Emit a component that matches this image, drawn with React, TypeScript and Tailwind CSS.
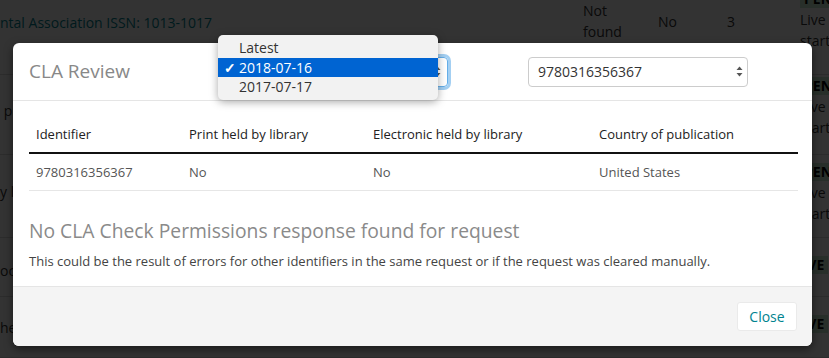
import React from 'react';

const font = { fontFamily: '"Open Sans", "Liberation Sans", sans-serif' };

const rows = [
  { h: 'h-[75px]', left: 'ntal Association ISSN: 1013-1017', leftY: 'pt-[12px]', right: '-mt-[12px]', mid: true, badge: 'PENDING', lines: true },
  { h: 'h-[80px]', left: ' print provided', leftY: 'pt-[25px]', right: 'pt-0', mid: false, badge: 'PENDING', lines: true },
  { h: 'h-[83px]', left: 'y library', leftY: 'pt-[26px]', right: 'pt-[6px]', mid: false, badge: 'PENDING', lines: true },
  { h: 'h-[59px]', left: 'ocess', leftY: 'pt-[22px]', right: 'pt-[16px]', mid: false, badge: 'ACTIVE', lines: false },
  { h: 'h-[61px]', left: 'here', leftY: 'pt-[20px]', right: 'pt-[16px]', mid: false, badge: 'ACTIVE', lines: false },
];

const Backdrop: React.FC = () => (
  <div className="bg-white text-[14px] leading-[21px] text-[#333]">
    {rows.map((r, i) => (
      <div key={i} className={`flex ${r.h} border-b border-[#ddd] overflow-hidden`}>
        <div className={`w-[583px] shrink-0 whitespace-pre ${r.leftY} ${i === 0 ? 'text-[#00838f]' : ''}`}>
          {r.left}
        </div>
        <div className="w-[75px] shrink-0">{r.mid ? <>Not<br />found</> : null}</div>
        <div className="w-[69px] shrink-0 pt-[11px]">{r.mid ? 'No' : null}</div>
        <div className="w-[73px] shrink-0 pt-[11px]">{r.mid ? '3' : null}</div>
        <div className={`shrink-0 ${r.right} ${r.lines ? '' : '-ml-[28px]'}`}>
          <span className="inline-block bg-[#c9e8cf] px-1 font-bold text-black leading-[18px]">{r.badge}</span>
          {r.lines ? (
            <>
              <div className="whitespace-nowrap">Live l</div>
              <div className="whitespace-nowrap">start</div>
            </>
          ) : null}
        </div>
      </div>
    ))}
  </div>
);

const Arrows: React.FC = () => (
  <svg width="7" height="11" viewBox="0 0 7 11" className="shrink-0">
    <path d="M3.5 0.5 L6.5 4 L0.5 4 Z" fill="#555" />
    <path d="M3.5 10.5 L6.5 7 L0.5 7 Z" fill="#555" />
  </svg>
);

export default function App() {
  return (
    <div className="relative h-[358px] w-[829px] overflow-hidden" style={font}>
      <Backdrop />
      <div className="absolute inset-0 bg-black/80" />

      {/* modal */}
      <div className="absolute left-[13px] top-[43px] w-[799px] rounded-[6px] bg-white shadow-[0_3px_9px_rgba(0,0,0,0.5)] overflow-hidden">
        <div className="flex items-center h-[58px] px-[16px] border-b border-[#e5e5e5]">
          <div className="w-[199px] text-[19px] text-[#888] leading-none">CLA Review</div>
          <div className="w-[220px] h-[30px] rounded-[4px] border border-[#66afe9] shadow-[0_0_0_3px_rgba(102,175,233,0.6)] flex items-center justify-end px-[6px] text-[14px] text-[#333]">
            <Arrows />
          </div>
          <div className="ml-[80px] w-[220px] h-[30px] rounded-[4px] border border-[#ccc] flex items-center justify-between pl-[9px] pr-[4px] text-[14px] text-[#333]">
            <span>9780316356367</span>
            <Arrows />
          </div>
        </div>

        <div className="px-[16px] pt-[15px] pb-[16px]">
          <table className="w-[769px] text-[13px] leading-[20px] table-fixed border-collapse">
            <thead>
              <tr className="border-b-2 border-[#111] text-[#222]">
                <th className="w-[152px] text-left font-normal px-[7px] py-[8px]">Identifier</th>
                <th className="w-[184px] text-left font-normal px-[8px] py-[8px]">Print held by library</th>
                <th className="w-[226px] text-left font-normal px-[8px] py-[8px]">Electronic held by library</th>
                <th className="text-left font-normal px-[8px] py-[8px]">Country of publication</th>
              </tr>
            </thead>
            <tbody>
              <tr className="border-b border-[#e6e6e6] text-[#555]">
                <td className="px-[7px] py-[8px]">9780316356367</td>
                <td className="px-[8px] py-[8px]">No</td>
                <td className="px-[8px] py-[8px]">No</td>
                <td className="px-[8px] py-[8px]">United States</td>
              </tr>
            </tbody>
          </table>
          <h3 className="mt-[29px] text-[19.3px] leading-[22px] text-[#8a8a8a]">
            No CLA Check Permissions response found for request
          </h3>
          <p className="mt-[10px] text-[13px] leading-[18px] text-[#444]">
            This could be the result of errors for other identifiers in the same request or if the request was cleared manually.
          </p>
        </div>

        <div className="h-[60px] bg-[#f4f4f4] border-t border-[#e5e5e5] flex items-center justify-end px-[15px]">
          <button className="w-[60px] h-[29px] rounded-[3px] bg-white border border-[#eaeaea] text-[14px] text-[#00838f]">
            Close
          </button>
        </div>
      </div>

      {/* open native select list */}
      <div className="absolute left-[218px] top-[35px] w-[220px] rounded-[5px] bg-[#f2f2f2] shadow-[0_2px_8px_rgba(0,0,0,0.35)] py-[3px] text-[14px] leading-[19.5px] text-[#333]">
        <div className="pl-[21px]">Latest</div>
        <div className="flex bg-[#0064d2] text-white">
          <span className="w-[21px] pl-[6px] font-bold">✓</span>
          <span>2018-07-16</span>
        </div>
        <div className="pl-[21px]">2017-07-17</div>
      </div>
    </div>
  );
}
